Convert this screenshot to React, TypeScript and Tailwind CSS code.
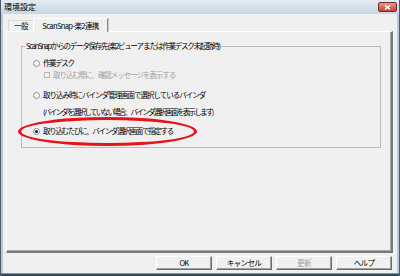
const jp = "font-['Noto_Sans_CJK_JP','Liberation_Sans',sans-serif]";

function Radio({ checked }: { checked?: boolean }) {
  return (
    <span className="flex items-center justify-center w-[7px] h-[7px] rounded-full border border-[#8e8f8f] bg-white shrink-0">
      {checked && <span className="w-[3px] h-[3px] rounded-full bg-[#1a1a1a]" />}
    </span>
  );
}

function Btn({ label, disabled }: { label: string; disabled?: boolean }) {
  return (
    <button
      className={`w-[56px] h-[14px] flex items-center justify-center bg-[#f0f0f0] border border-t-white border-l-white border-r-[#6a6a6a] border-b-[#6a6a6a] shadow-[inset_-1px_-1px_0_#a0a0a0] text-[7.5px] leading-[10px] tracking-[-0.6px] ${
        disabled ? "text-[#a0a0a0]" : "text-black"
      }`}
    >
      {label}
    </button>
  );
}

export default function App() {
  return (
    <div className={`w-[400px] h-[276px] flex flex-col bg-[#b9c8d7] border-x border-[#4a5c6d] overflow-hidden ${jp}`}>
      {/* title bar */}
      <div className="h-[14px] shrink-0 flex items-center justify-between pl-[3px] pr-[2px] bg-gradient-to-b from-[#e4ebf3] to-[#c8d6e4]">
        <span className="text-[8px] leading-[10px] text-black">環境設定</span>
        <span className="w-[19px] h-[10px] flex items-center justify-center rounded-[2px] border border-[#7a2a22] bg-gradient-to-b from-[#e49a8a] to-[#c2412f]">
          <svg width="7" height="5" viewBox="0 0 7 5">
            <path d="M1 0.5 L6 4.5 M6 0.5 L1 4.5" stroke="white" strokeWidth="1.4" />
          </svg>
        </span>
      </div>

      {/* client area */}
      <div className="flex-1 mx-[2px] bg-[#f0f0f0] flex flex-col pl-[3px] pr-[4px] pb-[3px]">
        {/* tabs */}
        <div className="h-[17px] shrink-0 flex items-end">
          <div className="ml-[2px] w-[25px] h-[11px] flex items-center justify-center border-t border-l border-[#d8d8d8] text-[7.5px] leading-[10px] tracking-[-0.6px] text-black">
            一般
          </div>
          <div className="relative z-10 -mb-[1px] w-[75px] h-[14px] flex items-center justify-center bg-[#f0f0f0] border-t border-l border-white border-r border-r-[#8a8a8a] shadow-[1px_0_0_#c8c8c8] text-[7.5px] leading-[10px] tracking-[-0.6px] text-black">
            ScanSnap-楽2連携
          </div>
        </div>

        {/* tab panel */}
        <div className="flex-1 border-t border-l border-white border-r-2 border-b-2 border-r-[#7a7a7a] border-b-[#7a7a7a] shadow-[inset_-1px_-1px_0_#a8a8a8]">
          <fieldset className="mt-[9px] ml-[14px] w-[360px] border border-[#bcbcbc] pb-[11px]">
            <legend className="ml-[3px] px-[1px] text-[7.5px] leading-[10px] tracking-[-1.25px] text-black">
              ScanSnapからのデータ保存先 (楽2ビューア または 作業デスク未起動時)
            </legend>
            <div className="pl-[11px] text-[7.5px] leading-[10px] text-black">
              <div className="flex items-center h-[10px] mt-[7px]">
                <Radio />
                <span className="ml-[3px] tracking-[-1.4px]">作業デスク</span>
              </div>
              <div className="flex items-center h-[10px] mt-[2px] ml-[11px]">
                <span className="w-[6px] h-[6px] border border-[#b4b4b4] bg-[#f4f4f4] shrink-0" />
                <span className="ml-[3px] tracking-[-1.05px] text-[#a0a0a0]">取り込む際に、確認メッセージを表示する</span>
              </div>
              <div className="flex items-center h-[10px] mt-[10px]">
                <Radio />
                <span className="ml-[3px] tracking-[-1px]">取り込み時にバインダ管理画面で選択しているバインダ</span>
              </div>
              <div className="h-[10px] mt-[7px] pl-[10px] tracking-[-1.7px]">
                (バインダを選択していない場合、バインダ選択画面を表示します)
              </div>
              <div className="relative flex items-center h-[10px] mt-[9px]">
                <Radio checked />
                <span className="ml-[3px] tracking-[-1.3px]">取り込むたびに、バインダ選択画面で指定する</span>
                <span className="absolute left-[-15px] top-[-9px] w-[179px] h-[29px] rounded-[50%] border-[3px] border-[#e3141c]" />
              </div>
            </div>
          </fieldset>
        </div>

        {/* buttons */}
        <div className="mt-[3px] flex justify-end gap-[4px] pr-[1px]">
          <Btn label="OK" />
          <Btn label="キャンセル" />
          <Btn label="更新" disabled />
          <Btn label="ヘルプ" />
        </div>
      </div>

      {/* bottom frame */}
      <div className="h-[3px] shrink-0 border-t border-[#35b6de] bg-[#2b4a5a]" />
    </div>
  );
}
